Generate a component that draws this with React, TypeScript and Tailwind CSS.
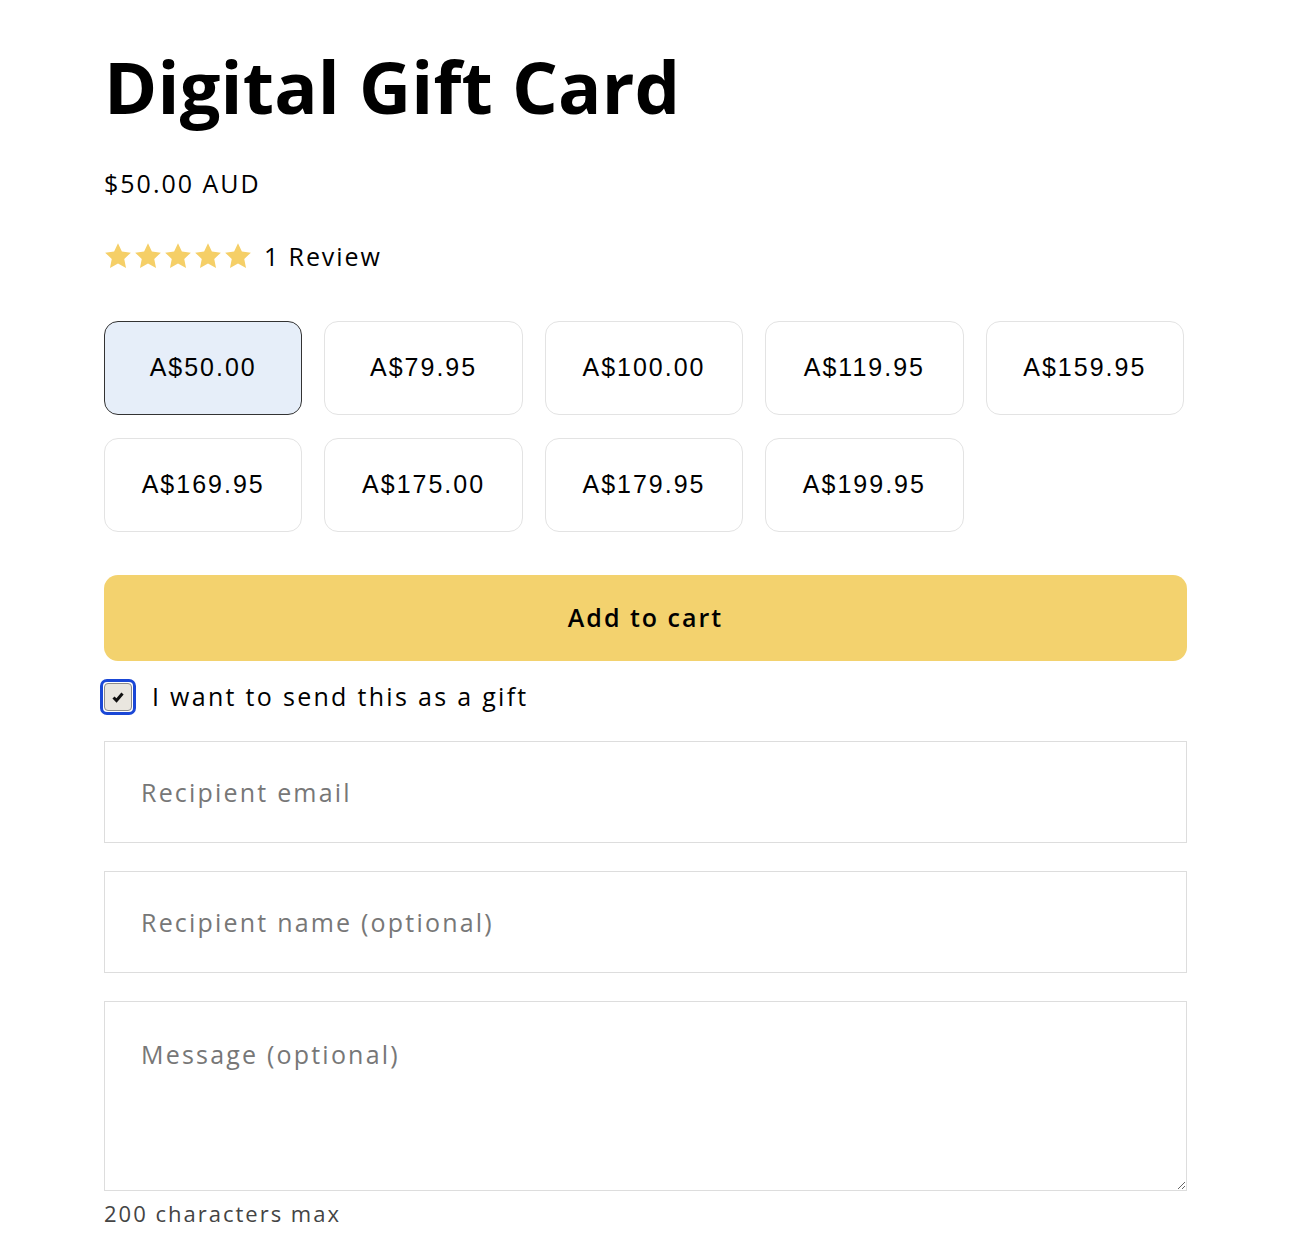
import { useState } from "react";

const amounts = [
  "A$50.00",
  "A$79.95",
  "A$100.00",
  "A$119.95",
  "A$159.95",
  "A$169.95",
  "A$175.00",
  "A$179.95",
  "A$199.95",
];

const body = { fontFamily: '"Open Sans", "Liberation Sans", sans-serif' };

function Star() {
  return (
    <svg viewBox="0 0 24 24" className="w-[30px] h-[30px]" fill="#f5cf67">
      <path d="M12 1.8l3.1 6.6 7.2.9-5.3 5 1.4 7.2L12 18l-6.4 3.5 1.4-7.2-5.3-5 7.2-.9z" />
    </svg>
  );
}

export default function App() {
  const [selected, setSelected] = useState(0);
  const [gift, setGift] = useState(true);

  const field =
    "h-[102px] w-full border border-[#dddddd] px-[36px] text-[25px] tracking-[2.2px] placeholder:text-[#777777] outline-none";

  return (
    <div className="bg-white min-h-[1250px] text-black" style={body}>
      <div className="w-[1083px] ml-[104px] pt-[40px]">
        {/* Title */}
        <h1 className="text-[72px] leading-[92px] font-bold tracking-[0.2px]">
          Digital Gift Card
        </h1>

        <p className="mt-[36px] text-[25px] leading-[30px] tracking-[2px]">$50.00 AUD</p>

        <div className="mt-[43px] h-[30px] flex items-center gap-[11px]">
          <div className="flex -ml-[1px]">
            {[0, 1, 2, 3, 4].map((i) => (
              <Star key={i} />
            ))}
          </div>
          <span className="text-[25px] leading-[30px] tracking-[1.9px]">1 Review</span>
        </div>

        {/* Amounts */}
        <div className="mt-[50px] grid grid-cols-5 gap-x-[22px] gap-y-[23px] w-[1080px]">
          {amounts.map((a, i) => (
            <button
              key={a}
              onClick={() => setSelected(i)}
              className={`h-[94px] rounded-[14px] text-[25px] tracking-[2px] ${
                selected === i
                  ? "bg-[#e6eef9] border-[1.5px] border-[#333333]"
                  : "bg-white border border-[#e3e3e3]"
              }`}
              style={{ fontFamily: '"Liberation Sans", Arial, sans-serif' }}
            >
              {a}
            </button>
          ))}
        </div>

        {/* Add to cart */}
        <button className="mt-[43px] w-full h-[86px] rounded-[14px] bg-[#f3d26e] text-[25px] font-semibold tracking-[2px]">
          Add to cart
        </button>

        {/* Gift checkbox */}
        <label className="mt-[18px] h-[36px] flex items-center gap-[16px] -ml-[4px] cursor-pointer">
          <span
            onClick={() => setGift(!gift)}
            className="w-[36px] h-[36px] rounded-[7px] border-[3px] border-[#1a47d6] flex items-center justify-center"
          >
            <span className="w-[28px] h-[28px] rounded-[4px] bg-[#e9e6df] border border-[#8a8a8a] flex items-center justify-center">
              {gift && (
                <svg viewBox="0 0 16 16" className="w-[16px] h-[16px]">
                  <path d="M3.5 8.5l3 3 6-7" fill="none" stroke="#111" strokeWidth="3" />
                </svg>
              )}
            </span>
          </span>
          <span className="text-[25px] tracking-[2.3px]">I want to send this as a gift</span>
        </label>

        {/* Fields */}
        <div className="mt-[26px] flex flex-col gap-[28px]">
          <input placeholder="Recipient email" className={field} />
          <input placeholder="Recipient name (optional)" className={field} />
          <textarea
            placeholder="Message (optional)"
            className="h-[190px] w-full border border-[#dddddd] px-[36px] pt-[34px] text-[25px] tracking-[2.2px] placeholder:text-[#777777] outline-none"
          />
        </div>
        <p className="mt-[9px] text-[22px] leading-[26px] text-[#444444] tracking-[2px]">
          200 characters max
        </p>
      </div>
    </div>
  );
}
